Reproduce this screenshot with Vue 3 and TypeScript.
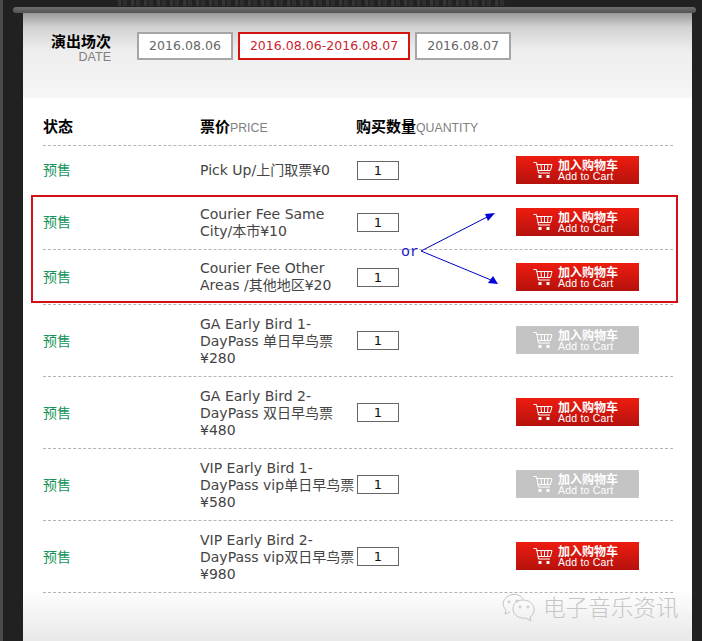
<script setup lang="ts">
interface Row { label: string[]; disabled?: boolean; height: number }
const rows: Row[] = [
  { label: ['Pick Up/上门取票¥0'], height: 50 },
  { label: ['Courier Fee Same', 'City/本市¥10'], height: 54 },
  { label: ['Courier Fee Other', 'Areas /其他地区¥20'], height: 55 },
  { label: ['GA Early Bird 1-', 'DayPass 单日早鸟票', '¥280'], disabled: true, height: 72 },
  { label: ['GA Early Bird 2-', 'DayPass 双日早鸟票', '¥480'], height: 72 },
  { label: ['VIP Early Bird 1-', 'DayPass vip单日早鸟票', '¥580'], disabled: true, height: 72 },
  { label: ['VIP Early Bird 2-', 'DayPass vip双日早鸟票', '¥980'], height: 72 },
]
const dates = [
  { text: '2016.08.06', active: false },
  { text: '2016.08.06-2016.08.07', active: true },
  { text: '2016.08.07', active: false },
]
</script>

<template>
  <div class="page">
    <div class="strip"></div>
    <div class="ghost"></div>
    <div class="rail"></div>
    <main class="panel">
      <header class="head">
        <div class="title">
          <strong>演出场次</strong>
          <span>DATE</span>
        </div>
        <div class="dates">
          <span v-for="d in dates" :key="d.text" class="date" :class="{ active: d.active }">{{ d.text }}</span>
        </div>
      </header>

      <section class="table">
        <div class="cols top">
          <div><b>状态</b></div>
          <div><b>票价</b><small>PRICE</small></div>
          <div class="nowrap"><b>购买数量</b><small>QUANTITY</small></div>
        </div>
        <div v-for="(r, i) in rows" :key="i" class="cols row" :class="{ tall: r.label.length === 3 }" :style="{ height: r.height + 'px' }">
          <div class="status">预售</div>
          <div class="price"><div v-for="l in r.label" :key="l">{{ l }}</div></div>
          <div><span class="qty">1</span></div>
          <div class="buy-cell">
            <div class="buy" :class="{ off: r.disabled }">
              <svg width="20" height="18" viewBox="0 0 20 18" fill="none" stroke="currentColor" stroke-width="1">
                <path d="M.5 1.500h3l2 10.500h11.500" />
                <path d="M3.500 3.500h15.500l-1.500 6H5" />
                <path d="M8 3.500l.5 6M11.500 3.500v6M15 3.500l-.5 6" />
                <rect x="5.500" y="14" width="3" height="3" fill="currentColor" stroke="none" />
                <rect x="13.500" y="14" width="3" height="3" fill="currentColor" stroke="none" />
              </svg>
              <div class="buy-text">
                <b>加入购物车</b>
                <span>Add to Cart</span>
              </div>
            </div>
          </div>
        </div>

        <div class="redbox"></div>
        <span class="or">or</span>
        <svg class="arrows" width="100" height="90" viewBox="0 0 100 90" fill="none">
          <path d="M1 39 L69 4" stroke="#0000c8" stroke-width="1" />
          <path d="M1 39 L71 68" stroke="#0000c8" stroke-width="1" />
          <path d="M75 1 L65 2 L68 9 Z" fill="#0000d8" />
          <path d="M78 72 L68 71 L73 64 Z" fill="#0000d8" />
        </svg>
      </section>
      <div class="mark">
        <svg width="36" height="30" viewBox="0 0 36 30" fill="none" stroke="#c4c4c4" stroke-width="1">
          <path d="M22 7C19 2 12 1 7 4 1 8 1 14 5 18l-1 4 5-2" />
          <path d="M8 9a1 1 0 1 0 .1 0M16 8a1 1 0 1 0 .1 0" />
          <path d="M22 8c7 0 12 5 11 11-.5 3-2 5-4 6l1 4-5-3c-7 1-13-3-13-9s4-9 10-9z" />
          <path d="M19 14a1 1 0 1 0 .1 0M27 14a1 1 0 1 0 .1 0" />
        </svg>
        <span>电子音乐资讯</span>
      </div>
    </main>
  </div>
</template>

<style>
html, body { margin: 0; background: #222; }
</style>

<style scoped>
.page {
  position: relative;
  width: 702px;
  height: 641px;
  overflow: hidden;
  background: #212121;
  font-family: "DejaVu Sans", "Noto Sans CJK SC", sans-serif;
}
.strip {
  position: absolute;
  left: 0;
  top: 0;
  bottom: 0;
  width: 3px;
  background: #4a4a4a;
}
.ghost {
  position: absolute;
  top: 0;
  left: 118px;
  width: 390px;
  height: 6px;
  background: repeating-linear-gradient(90deg, #343434 0 3px, #242424 3px 5px, #2e2e2e 5px 9px, #222 9px 13px);
}
.rail {
  position: absolute;
  left: 13px;
  right: 6px;
  top: 7px;
  height: 6px;
  background: linear-gradient(#6e6e6e, #545454);
  border-radius: 3px;
}
.panel {
  position: absolute;
  left: 23px;
  top: 13px;
  width: 669px;
  height: 628px;
  background: linear-gradient(#fff calc(100% - 52px), #e8e8e8);
}
.head {
  height: 85px;
  background: linear-gradient(#9a9a9a 0, #d2d2d2 14px, #eeeeee 38px, #f6f6f6 85px);
  display: flex;
  align-items: flex-start;
  padding-top: 18px;
  box-sizing: border-box;
}
.title {
  width: 88px;
  text-align: right;
  display: flex;
  flex-direction: column;
  margin-right: 26px;
}
.title strong {
  font-size: 15px;
  line-height: 19px;
  color: #000;
  font-family: "Noto Sans CJK SC", sans-serif;
}
.title span {
  font-family: "Liberation Sans", sans-serif;
  font-size: 12.500px;
  line-height: 12px;
  margin-top: 1px;
  color: #808080;
}
.dates { display: flex; gap: 5px; margin-top: 1px; }
.date {
  box-sizing: border-box;
  height: 28px;
  line-height: 24px;
  padding: 0 10px;
  border: 2px solid #a6a6a6;
  background: #fff;
  color: #666;
  font-size: 12.500px;
  letter-spacing: .03px;
  white-space: nowrap;
}
.date.active { border-color: #d3150f; color: #c8252f; }
.table {
  position: relative;
  margin: 18px 19px 0 20px;
}
.cols {
  display: grid;
  grid-template-columns: 157px 156px 160px 157px;
  align-items: center;
  border-bottom: 1px dashed #b4b4b4;
  box-sizing: border-box;
}
.top {
  height: 30px;
  font-size: 15px;
  align-items: start;
  line-height: 20px;
}
.top b { color: #000; font-family: "Noto Sans CJK SC", sans-serif; }
.top small { font-family: "Liberation Sans", sans-serif; font-size: 12.300px; color: #808080; }
.nowrap { white-space: nowrap; }
.status {
  color: #13945a;
  font-size: 14px;
  line-height: 18px;
  padding-bottom: 3px;
  font-family: "Noto Sans CJK SC", sans-serif;
}
.tall .status { padding-bottom: 1px; }
.price { font-size: 14px; line-height: 17px; color: #444; white-space: nowrap; }
.tall .price { padding-top: 2px; }
.qty {
  display: block;
  box-sizing: border-box;
  width: 42px;
  height: 19px;
  margin-left: 1px;
  border: 1px solid #666;
  background: #fff;
  text-align: center;
  font-size: 13px;
  line-height: 17px;
  color: #111;
}
.buy-cell { padding-bottom: 1px; }
.buy {
  width: 123px;
  height: 28px;
  display: flex;
  align-items: center;
  gap: 5px;
  padding-left: 17px;
  box-sizing: border-box;
  color: #fff;
  background: linear-gradient(#ee1c10, #b5120d);
}
.buy.off { background: #c4c4c4; border-radius: 1px; }
.buy-text { display: flex; flex-direction: column; }
.buy-text b { display: block; font-size: 12px; line-height: 13px; font-family: "Noto Sans CJK SC", sans-serif; }
.buy-text span { display: block; font-size: 10.500px; line-height: 11px; font-family: "Liberation Sans", sans-serif; letter-spacing: .2px; }
.redbox {
  position: absolute;
  left: -12px;
  right: -5px;
  top: 79px;
  height: 108px;
  box-sizing: border-box;
  border: 2px solid #d20f16;
}
.or {
  position: absolute;
  left: 358px;
  top: 129px;
  font-family: "Liberation Mono", monospace;
  font-size: 15px;
  line-height: 16px;
  color: #1a1ac8;
}
.arrows { position: absolute; left: 377px; top: 96px; }
.mark {
  position: absolute;
  left: 478px;
  top: 579px;
  display: flex;
  align-items: center;
  gap: 6px;
  color: #c6c6c6;
  font-size: 22.600px;
  line-height: 30px;
  font-family: "Noto Sans CJK SC", sans-serif;
  font-weight: 300;
  white-space: nowrap;
}
</style>
